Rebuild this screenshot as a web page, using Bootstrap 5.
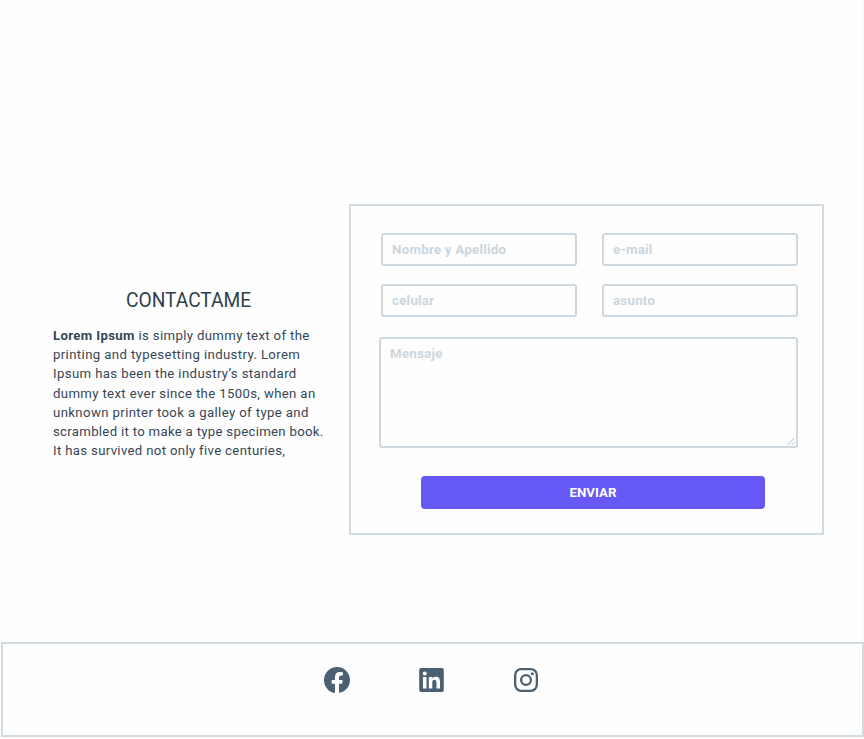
<!DOCTYPE html>
<html lang="es">
<head>
<meta charset="utf-8">
<meta name="viewport" content="width=device-width, initial-scale=1">
<title>Contacto</title>
<link href="https://cdn.jsdelivr.net/npm/bootstrap@5.3.0/dist/css/bootstrap.min.css" rel="stylesheet">
<style>
body{font-family:Roboto,"Liberation Sans",sans-serif;color:#364655;background:#fefefe;height:739px;overflow:hidden}
.contact-area{height:642px;padding:204px 39px 0 53px;border-right:1px solid #f5f7f9}
.intro{width:271px;padding-top:83px}
.intro h1{font-size:21px;line-height:27px;color:#303f4d;margin-bottom:12px}
.title{display:inline-block;transform:scaleX(.913)}
.intro p{font-size:13.2px;line-height:19.2px;white-space:nowrap}
.intro p>span{display:block;width:max-content}
.l1,.l4{letter-spacing:.35px}.l2,.l3,.l5{letter-spacing:.375px}.l6{letter-spacing:.3px}.l7{letter-spacing:.33px}
.form-frame{width:475px;height:331px;border:2px solid #d1dbe4;padding:27px 24px 0 28px}
.fields{display:grid;grid-template-columns:196px 196px;column-gap:25px;row-gap:18px;padding-left:2px}
.form-frame .form-control{border:2px solid #d0d8df;border-radius:3px;background:#fefefe;font-size:13.3px;letter-spacing:.25px;font-weight:700;line-height:20px;padding:0 9px 1px;height:33px}
.form-frame .form-control::placeholder{color:#cbd6df;opacity:1}
.form-frame textarea.form-control{height:111px;width:419px;padding-top:5px;resize:none}
.message{margin-top:20px;width:419px}
.grip{right:2px;bottom:2px}
.send,.send:hover{width:344px;height:33px;margin:28px 0 0 42px;padding:1px 0 0;background:#6558f5;color:#fff;border:0;border-radius:4px;font-size:13.3px;font-weight:700}
.social{height:95px;margin-left:1px;border:2px solid #d1dbe4;padding:23px 0 0 321px;gap:69px}
</style>
<script src="https://cdn.jsdelivr.net/npm/bootstrap@5.3.0/dist/js/bootstrap.bundle.min.js"></script>
</head>
<body>
<main class="contact-area d-flex justify-content-between">
  <section class="intro">
    <h1 class="fw-normal text-center"><span class="title">CONTACTAME</span></h1>
    <p class="mb-0">
      <span class="l1"><strong>Lorem Ipsum</strong> is simply dummy text of the</span>
      <span class="l2">printing and typesetting industry. Lorem</span>
      <span class="l3">Ipsum has been the industry’s standard</span>
      <span class="l4">dummy text ever since the 1500s, when an</span>
      <span class="l5">unknown printer took a galley of type and</span>
      <span class="l6">scrambled it to make a type specimen book.</span>
      <span class="l7">It has survived not only five centuries,</span>
    </p>
  </section>
  <form class="form-frame flex-shrink-0">
    <div class="fields">
      <input class="form-control" placeholder="Nombre y Apellido">
      <input class="form-control" placeholder="e-mail">
      <input class="form-control" placeholder="celular">
      <input class="form-control" placeholder="asunto">
    </div>
    <div class="message position-relative">
      <textarea class="form-control d-block" placeholder="Mensaje"></textarea>
      <svg class="grip position-absolute" width="9" height="9" viewBox="0 0 9 9" stroke="#d0d8df" stroke-width="1.3"><path d="M.5 8 7.5 1M4.5 8 8 4.5"/></svg>
    </div>
    <button type="button" class="btn send d-block">ENVIAR</button>
  </form>
</main>
<footer class="social d-flex align-items-start">
  <svg width="26" height="26" viewBox="0 0 16 16" fill="#4c6071"><path d="M16 8.049c0-4.446-3.582-8.05-8-8.05C3.58 0-.002 3.603-.002 8.05c0 4.017 2.926 7.347 6.75 7.951v-5.625h-2.03V8.05H6.75V6.275c0-2.017 1.195-3.131 3.022-3.131.876 0 1.791.157 1.791.157v1.98h-1.009c-.993 0-1.303.621-1.303 1.258v1.51h2.218l-.354 2.326H9.25V16c3.824-.604 6.75-3.934 6.75-7.951z"/></svg>
  <svg width="25" height="26" viewBox="0 0 25 26" fill="#4c6071"><path fill-rule="evenodd" d="M2 1h21a1.8 1.8 0 0 1 1.8 1.8v20.4A1.8 1.8 0 0 1 23 25H2a1.8 1.8 0 0 1-1.8-1.8V2.800A1.8 1.800 0 0 1 2 1zM4 10v11.500h3.500V10zM5.750 4.400a2.050 2.050 0 1 0 0 4.100 2.050 2.050 0 0 0 0-4.100zM9.800 10v11.500h3.500v-5.700c0-1.700.5-3 2.200-3s2 1.400 2 3.100v5.600H21v-6.300c0-3.500-1-5.500-4.200-5.500-1.700 0-2.800.9-3.300 1.800V10z"/></svg>
  <svg width="26" height="26" viewBox="0 0 26 26" fill="none" stroke="#4c6071" stroke-width="2.300"><rect x="2.150" y="2.150" width="21.700" height="21.700" rx="6"/><circle cx="13" cy="13" r="4.900"/><circle cx="19.300" cy="6.700" r="1.500" fill="#4c6071" stroke="none"/></svg>
</footer>
</body>
</html>
